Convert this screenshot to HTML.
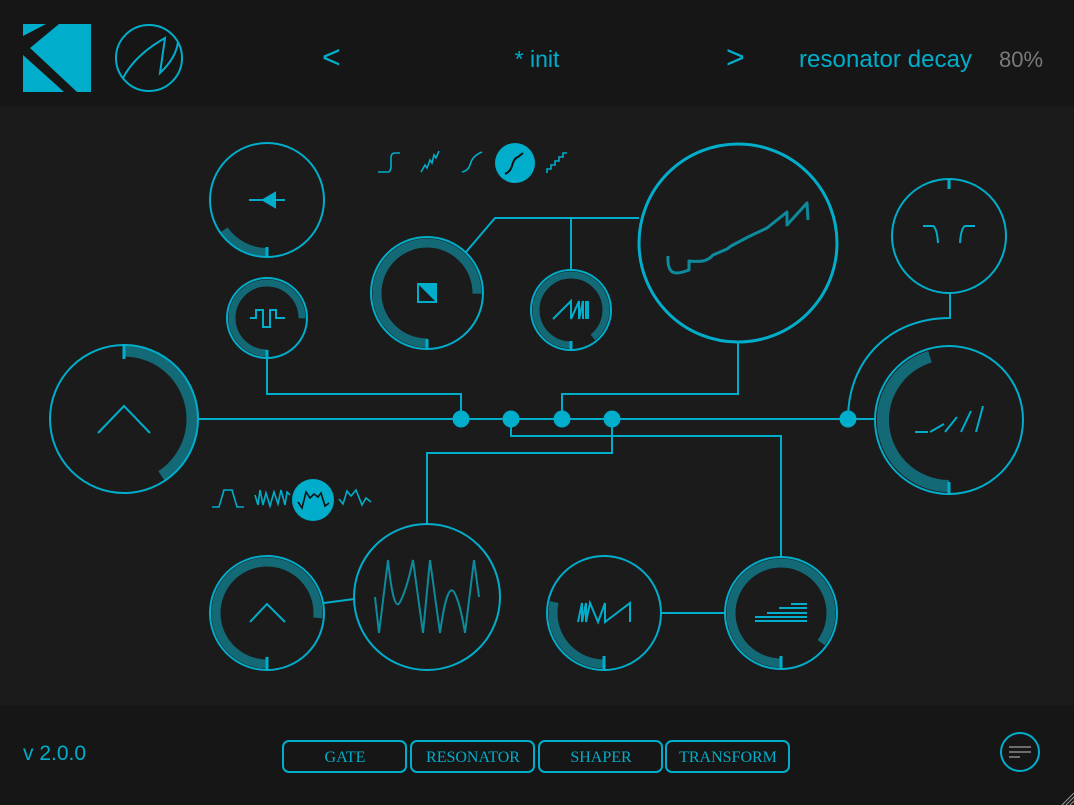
<!DOCTYPE html>
<html><head><meta charset="utf-8"><style>
html,body{margin:0;padding:0;background:#1b1b1b;width:1074px;height:805px;overflow:hidden}
svg{display:block}
.t{font-family:"Liberation Sans","DejaVu Sans",sans-serif}
.b{font-family:"Liberation Serif",serif;font-size:16px;fill:#00aecb;text-anchor:middle}
</style></head><body>
<svg width="1074" height="805" viewBox="0 0 1074 805" xmlns="http://www.w3.org/2000/svg">
<rect x="0" y="0" width="1074" height="107" fill="#161616"/>
<rect x="0" y="705" width="1074" height="100" fill="#161616"/>
<g fill="#00aecb">
<polygon points="23,24 46,24 23,36"/>
<polygon points="59,24 91,24 91,92 77,92 30,48"/>
<polygon points="23,55 23,92 64,92"/>
</g>
<circle cx="149" cy="58" r="33" fill="none" stroke="#00aecb" stroke-width="2"/>
<path d="M123,78 Q135,55 165,38 L160,73 Q176,58 178,42" fill="none" stroke="#00aecb" stroke-width="2"/>
<text x="322" y="68" class="t" font-size="32" fill="#00aecb">&lt;</text>
<text x="537" y="67" class="t" font-size="23" fill="#00aecb" text-anchor="middle">* init</text>
<text x="726" y="68" class="t" font-size="32" fill="#00aecb">&gt;</text>
<text x="799" y="67" class="t" font-size="24" fill="#00aecb" textLength="173">resonator decay</text>
<text x="999" y="67" class="t" font-size="22" fill="#7a7a7a">80%</text>

<g fill="none" stroke="#00aecb" stroke-width="2">
<path d="M198,419 H875"/>
<path d="M267,359 V394 H461 V419"/>
<path d="M562,419 V394 H738 V342"/>
<path d="M511,419 V436 H781 V557"/>
<path d="M612,419 V453 H427 V523"/>
<path d="M466,252 L495,218 H639 M571,218 V270"/>
<path d="M848,419 C848,360 890,318 950,318 V292"/>
<path d="M324,603 L354,599"/>
<path d="M661,613 H724"/>
</g>
<g fill="#00aecb">
<circle cx="461" cy="419" r="8.5"/><circle cx="511" cy="419" r="8.5"/><circle cx="562" cy="419" r="8.5"/><circle cx="612" cy="419" r="8.5"/><circle cx="848" cy="419" r="8.5"/>
</g>

<g fill="none" stroke="#136a76">
<circle cx="124" cy="419" r="68" stroke-width="11" stroke-dasharray="174 1000" transform="rotate(-90 124 419)"/>
<circle cx="267" cy="200" r="52" stroke-width="8" stroke-dasharray="50 1000" transform="rotate(90 267 200)"/>
<circle cx="267" cy="318" r="35" stroke-width="7" stroke-dasharray="165 1000" transform="rotate(90 267 318)"/>
<circle cx="427" cy="293" r="50" stroke-width="9" stroke-dasharray="236 1000" transform="rotate(90 427 293)"/>
<circle cx="571" cy="310" r="35" stroke-width="7" stroke-dasharray="196 1000" transform="rotate(90 571 310)"/>
<circle cx="949" cy="420" r="66" stroke-width="12" stroke-dasharray="188 1000" transform="rotate(90 949 420)"/>
<circle cx="267" cy="613" r="51" stroke-width="9" stroke-dasharray="245 1000" transform="rotate(90 267 613)"/>
<circle cx="604" cy="613" r="51" stroke-width="9" stroke-dasharray="91 1000" transform="rotate(90 604 613)"/>
<circle cx="781" cy="613" r="50" stroke-width="9" stroke-dasharray="267 1000" transform="rotate(90 781 613)"/>
</g>

<g fill="none" stroke="#00aecb" stroke-width="2">
<circle cx="124" cy="419" r="74"/>
<circle cx="267" cy="200" r="57"/>
<circle cx="267" cy="318" r="40"/>
<circle cx="427" cy="293" r="56"/>
<circle cx="571" cy="310" r="40"/>
<circle cx="738" cy="243" r="99" stroke-width="3"/>
<circle cx="949" cy="236" r="57"/>
<circle cx="949" cy="420" r="74"/>
<circle cx="267" cy="613" r="57"/>
<circle cx="427" cy="597" r="73"/>
<circle cx="604" cy="613" r="57"/>
<circle cx="781" cy="613" r="56"/>
<path d="M124,345 V359 M267,247 V258 M267,350 V359 M427,339 V349 M571,341 V350 M949,179 V189 M949,482 V494 M267,657 V670 M604,656 V670 M781,656 V669" stroke-width="3"/>
</g>

<g fill="none" stroke="#00aecb" stroke-width="2">
<path d="M98,433 L124,406 L150,433"/>
<path d="M249,200 H285"/>
<path d="M263,200 L275,193 L275,207 Z" fill="#00aecb"/>
<path d="M250,318 H256 V310 H263 V327 H270 V310 H276 V318 H285"/>
<rect x="418" y="284" width="18" height="18"/>
<path d="M553,319 L571,301 L571,319 L579,301 L579,319 L583,301 V319 M586,301 V319 M588,301 V319"/>
<path d="M923,226 H933 Q937,228 938,243 M975,226 H965 Q961,228 960,243"/>
<path d="M915,432 H928 M930,432 L944,424 M945,432 L957,417 M961,432 L971,411 M976,432 L983,406"/>
<path d="M250,622 L267,604 L285,622"/>
<path d="M578,622 L582,603 L582,622 L586,603 L586,622 L590,603 L598,622 L605,603 L605,622 L630,603 L630,622"/>
<path d="M755,621 H807 M755,617 H807 M767,613 H807 M779,608 H807 M791,604 H807"/>
</g>
<polygon points="418,284 436,284 436,302" fill="#00aecb"/>
<g fill="none" stroke="#0d8a9b" stroke-width="3" stroke-linejoin="round">
<path d="M668,256 C667,276 676,275 689,270 L689,261 C700,262 707,262 713,255 L727,249 L731,246 L748,237 L767,228 L787,212 L787,225 L807,203 L808,220"/>
</g>
<g fill="none" stroke="#0d8a9b" stroke-width="2">
<path d="M375,597 L379,633 L388,560 Q394,618 401,600 Q407,588 413,560 L423,633 L430,560 L440,633 Q447,582 454,592 Q460,602 465,633 L474,560 L479,597"/>
</g>

<g fill="none" stroke="#00aecb" stroke-width="1.6">
<path d="M378,172 H388 Q391,172 391,165 V158 Q391,153 395,153 H400"/>
<path d="M421,172 L425,165 L427,168 L430,160 L432,163 L434,155 L436,158 L439,151"/>
<path d="M462,172 Q468,171 470,165 Q472,156 482,152"/>
<path d="M547,173 V169 H551 V165 H555 V161 H559 V157 H563 V153 H567"/>
</g>
<circle cx="515" cy="163" r="20" fill="#00aecb"/>
<path d="M505,174 Q510,172 512,166 Q514,158 518,157 L523,153" fill="none" stroke="#111" stroke-width="2"/>
<g fill="none" stroke="#00aecb" stroke-width="1.6">
<path d="M212,507 H219 L224,490 H232 L237,507 H244"/>
<path d="M255,495 L258,505 L260,490 L263,505 L266,493 L270,506 L274,492 L278,504 L281,490 L285,505 L287,492 L290,495"/>
<path d="M339,499 L343,504 L347,491 L351,496 L356,490 L362,505 L366,498 L371,502"/>
</g>
<circle cx="313" cy="500" r="21" fill="#00aecb"/>
<path d="M298,502 L302,508 L306,492 L310,498 L314,494 L318,497 L321,493 L325,506 L329,503" fill="none" stroke="#111" stroke-width="1.6"/>

<text x="23" y="760" class="t" font-size="21" fill="#00aecb">v 2.0.0</text>
<g fill="none" stroke="#00aecb" stroke-width="2">
<rect x="283" y="741" width="123" height="31" rx="6"/>
<rect x="411" y="741" width="123" height="31" rx="6"/>
<rect x="539" y="741" width="123" height="31" rx="6"/>
<rect x="666" y="741" width="123" height="31" rx="6"/>
<circle cx="1020" cy="752" r="19"/>
</g>
<text x="345" y="762" class="b">GATE</text>
<text x="473" y="762" class="b">RESONATOR</text>
<text x="601" y="762" class="b">SHAPER</text>
<text x="728" y="762" class="b">TRANSFORM</text>
<path d="M1009,747 H1031 M1009,752 H1031 M1009,757 H1020" stroke="#8a8a8a" stroke-width="1.5"/>
<path d="M1062,805 L1074,793 M1066,805 L1074,797 M1070,805 L1074,801" stroke="#9a9a9a" stroke-width="1"/>
</svg>
</body></html>
